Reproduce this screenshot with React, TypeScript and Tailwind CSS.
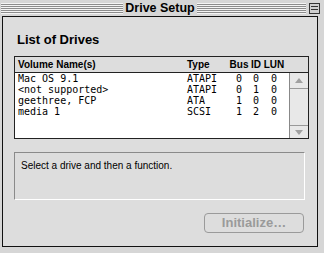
const drives = [
  { name: 'Mac OS 9.1', type: 'ATAPI', bus: '0', id: '0', lun: '0' },
  { name: '<not supported>', type: 'ATAPI', bus: '0', id: '1', lun: '0' },
  { name: 'geethree, FCP', type: 'ATA', bus: '1', id: '0', lun: '0' },
  { name: 'media 1', type: 'SCSI', bus: '1', id: '2', lun: '0' },
];

function Stripes({ className }: { className: string }) {
  return (
    <div
      className={`h-[11px] bg-[repeating-linear-gradient(to_bottom,#f4f4f4_0px,#f4f4f4_1px,#8c8c8c_1px,#8c8c8c_2px)] ${className}`}
    />
  );
}

export default function App() {
  const mono = "font-['DejaVu_Sans_Mono',monospace]";
  return (
    <div className="w-[324px] h-[253px] bg-[#d6d6d6] overflow-hidden font-['Liberation_Sans',Arial,sans-serif] text-black">
      {/* title bar */}
      <div className="h-[16px] flex items-center pl-[1px]">
        <Stripes className="w-[122px]" />
        <div className="w-[74px] text-center text-[12.5px] font-bold leading-[16px]">Drive Setup</div>
        <Stripes className="w-[109px]" />
        <div className="ml-[3px] w-[11px] h-[11px] border border-[#333] bg-[#cfcfcf] flex flex-col justify-center gap-[2px] px-[1px]">
          <div className="h-px bg-[#333]" />
          <div className="h-px bg-[#333]" />
        </div>
      </div>

      {/* window body */}
      <div className="ml-[2px] w-[316px] h-[231px] border border-[#111] bg-[#dddddd] pl-[11px]">
        <div className="mt-[15px] h-[16px] pl-[3px] text-[13px] font-bold leading-[16px]">List of Drives</div>

        {/* list box */}
        <div className="mt-[8px] w-[295px] h-[83px] border border-[#222] flex flex-col">
          <div className="h-[16px] border-b border-[#222] bg-[#dddddd] flex items-center text-[10px] font-bold leading-[15px] pl-[3px]">
            <div className="w-[169px]">Volume Name(s)</div>
            <div className="w-[41px]">Type</div>
            <div className="w-[22px] text-center">Bus</div>
            <div className="w-[12px] text-center">ID</div>
            <div className="w-[24px] text-center">LUN</div>
          </div>
          <div className="flex-1 flex bg-white">
            <div className={`flex-1 pl-[3px] text-[10px] leading-[11px] ${mono}`}>
              {drives.map((d) => (
                <div key={d.name} className="flex h-[11px]">
                  <div className="w-[169px]">{d.name}</div>
                  <div className="w-[41px]">{d.type}</div>
                  <div className="w-[22px] text-center">{d.bus}</div>
                  <div className="w-[12px] text-center">{d.id}</div>
                  <div className="w-[24px] text-center">{d.lun}</div>
                </div>
              ))}
            </div>
            <div className="w-[19px] border-l border-[#888] bg-[#e8e8e8] flex flex-col">
              <div className="h-[16px] border-b border-[#999] flex items-center justify-center">
                <svg width="8" height="5" viewBox="0 0 8 5">
                  <path d="M4 0 L8 5 L0 5 Z" fill="#a0a0a0" />
                </svg>
              </div>
              <div className="flex-1" />
              <div className="h-[13px] border-t border-[#999] flex items-center justify-center">
                <svg width="8" height="5" viewBox="0 0 8 5">
                  <path d="M0 0 L8 0 L4 5 Z" fill="#a0a0a0" />
                </svg>
              </div>
            </div>
          </div>
        </div>

        {/* status box */}
        <div className="mt-[13px] w-[291px] h-[48px] border border-t-[#8a8a8a] border-l-[#8a8a8a] border-b-white border-r-white pl-[6px] pt-[7px] text-[10px] leading-[12px]">
          Select a drive and then a function.
        </div>

        {/* button */}
        <div className="mt-[13px] ml-[190px] w-[100px] h-[20px] rounded-[4px] border border-[#9a9a9a] flex items-center justify-center text-[13px] font-bold text-[#9a9a9a]">
          Initialize…
        </div>
      </div>
    </div>
  );
}
